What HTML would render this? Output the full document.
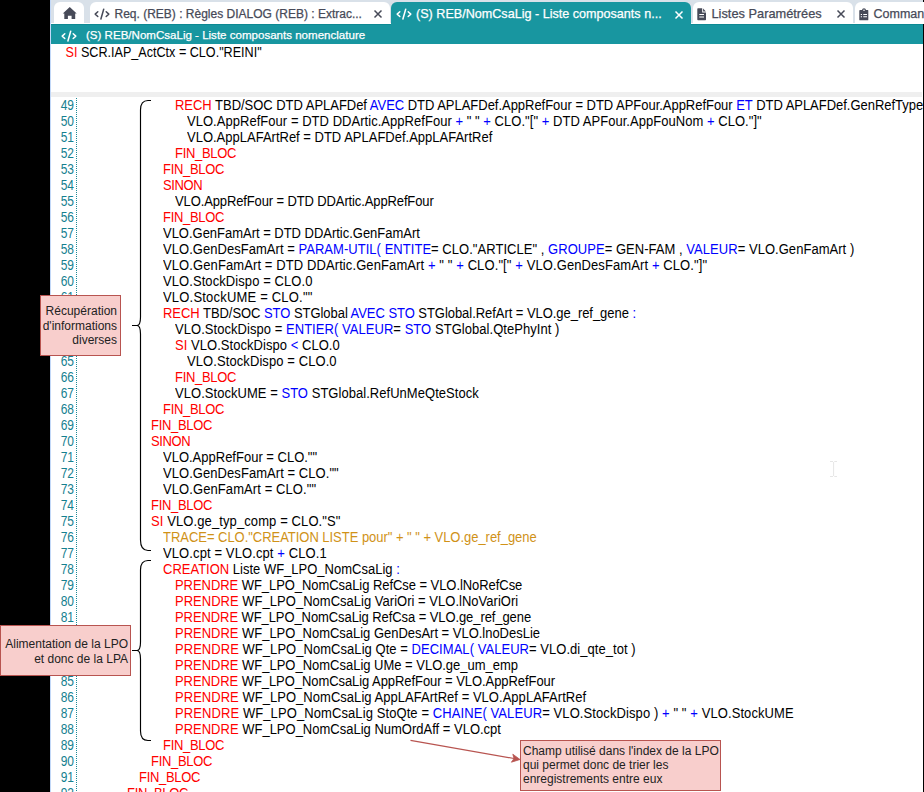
<!DOCTYPE html>
<html><head><meta charset="utf-8">
<style>
html,body{margin:0;padding:0;}
body{width:924px;height:792px;position:relative;overflow:hidden;background:#000;font-family:"Liberation Sans",sans-serif;}
.abs{position:absolute;}
i{font-style:normal;}
#app{position:absolute;left:50px;top:0;width:873px;height:792px;background:#fff;}
#edge{position:absolute;left:50px;top:0;width:1px;height:792px;background:#c2d8f8;}
#tabs{position:absolute;left:51px;top:0;width:872px;height:24px;background:linear-gradient(to bottom,#d9e1e9 0 23px,#fff 23px 24px);}
.tab{position:absolute;top:2px;height:22px;background:#fff;border-radius:6px 6px 0 0;}
.tab.act{background:#1896a0;}
.tt{position:absolute;top:7px;font-size:12px;line-height:14px;color:#474a58;white-space:pre;-webkit-text-stroke:0.25px #474a58;}
.tt.w{-webkit-text-stroke:0.25px #fff;}
.tt.w{color:#fff;}
#bar{position:absolute;left:51px;top:24px;width:872px;height:20px;background:#1896a0;border-top:1px solid #0d8a94;box-sizing:border-box;}
#band{position:absolute;left:51px;top:92px;width:871px;height:5px;background:#efefef;}
#code{position:absolute;left:0;top:0;width:923px;height:792px;overflow:hidden;}
.ln{position:absolute;left:50px;width:24px;text-align:right;font-size:12px;color:#15808f;line-height:16px;}
#dots{position:absolute;left:76px;top:98px;width:1px;height:700px;background:repeating-linear-gradient(to bottom,#1e8a96 0 1px,transparent 1px 2px);}
.cl{position:absolute;font-size:13px;line-height:16px;white-space:pre;color:#000;transform:scaleY(1.1);transform-origin:0 12.5px;}
.ln{transform:scaleY(1.17);transform-origin:0 12.3px;}
.k{color:#ff0000;}
.b{color:#0000ff;}
.o{color:#d09218;}
.box{position:absolute;background:#f8cecc;border:1px solid #b85450;box-sizing:border-box;font-size:12px;color:#222222;line-height:14px;}
</style></head><body>
<div id="app"></div>
<div id="edge"></div>

<div id="tabs"></div>
<div class="tab" style="left:53.5px;width:30.5px;"></div>
<svg class="abs" style="left:62px;top:6px" width="16" height="14" viewBox="0 0 16 14"><path d="M7.75 1 L0.8 7.6 L2.3 7.6 L2.3 12.9 L5.9 12.9 L5.9 9.7 L9.6 9.7 L9.6 12.9 L13.2 12.9 L13.2 7.6 L14.7 7.6 Z" fill="#474a58"/></svg>
<div class="tab" style="left:90px;width:299.5px;"></div>
<svg class="abs" style="left:93.5px;top:8px" width="16" height="13" viewBox="0 0 16 13"><g fill="none" stroke="#474a58" stroke-width="1.5" stroke-linecap="round" stroke-linejoin="round"><path d="M3.8 3.7 L1.2 6.1 L3.8 8.5"/><path d="M12.2 3.7 L14.8 6.1 L12.2 8.5"/><path d="M9.7 1.2 L6.9 11"/></g></svg>
<span class="tt" style="left:114.5px;">Req. (REB) : Règles DIALOG (REB) : Extrac...</span>
<svg class="abs" style="left:373px;top:9px" width="10" height="10" viewBox="0 0 10 10"><g stroke="#474a58" stroke-width="1.5" stroke-linecap="butt"><path d="M1.5 1.5 L8.5 8.5 M8.5 1.5 L1.5 8.5"/></g></svg>
<div class="tab act" style="left:391px;top:1.5px;height:22.5px;width:299.5px;"></div>
<svg class="abs" style="left:395.5px;top:8px" width="16" height="13" viewBox="0 0 16 13"><g fill="none" stroke="#fff" stroke-width="1.5" stroke-linecap="round" stroke-linejoin="round"><path d="M3.8 3.7 L1.2 6.1 L3.8 8.5"/><path d="M12.2 3.7 L14.8 6.1 L12.2 8.5"/><path d="M9.7 1.2 L6.9 11"/></g></svg>
<span class="tt w" style="left:416px;font-size:12.6px">(S) REB/NomCsaLig - Liste composants n...</span>
<svg class="abs" style="left:674px;top:9.5px" width="10" height="10" viewBox="0 0 10 10"><g stroke="#fff" stroke-width="1.5" stroke-linecap="butt"><path d="M1.5 1.5 L8.5 8.5 M8.5 1.5 L1.5 8.5"/></g></svg>
<div class="tab" style="left:692.5px;width:160px;"></div>
<svg class="abs" style="left:697px;top:8px" width="10" height="13" viewBox="0 0 10 13"><path d="M1 0.3 H5.2 V4.4 H9 V11.6 Q9 12.3 8.3 12.3 H1 Q0.3 12.3 0.3 11.6 V1 Q0.3 0.3 1 0.3 Z M6.1 0.4 L8.9 3.4 H6.1 Z" fill="#474a58"/><path d="M2.3 6.5 H7 M2.3 9 H7" stroke="#fff" stroke-width="1.1"/></svg>
<span class="tt" style="left:711.5px;font-size:12.8px">Listes Paramétrées</span>
<svg class="abs" style="left:836px;top:9px" width="10" height="10" viewBox="0 0 10 10"><g stroke="#474a58" stroke-width="1.5" stroke-linecap="butt"><path d="M1.5 1.5 L8.5 8.5 M8.5 1.5 L1.5 8.5"/></g></svg>
<div class="tab" style="left:855px;width:120px;"></div>
<svg class="abs" style="left:859px;top:8px" width="10" height="13" viewBox="0 0 10 13"><path d="M1 2 H3 Q3.2 0.3 5 0.3 Q6.8 0.3 7 2 H9 Q9.3 2 9.3 2.4 V11.8 Q9.3 12.3 8.8 12.3 H1 Q0.3 12.3 0.3 11.8 V2.4 Q0.3 2 1 2 Z" fill="#474a58"/><circle cx="5" cy="2.3" r="0.8" fill="#fff"/><path d="M1.8 6.5 H3 M4.3 6.5 H8 M1.8 8.8 H3 M4.3 8.8 H8" stroke="#fff" stroke-width="1.1"/></svg>
<span class="tt" style="left:873.5px;font-size:12.5px">Commandes</span>

<div id="bar"></div>
<div class="abs" style="left:391px;top:23px;width:299.5px;height:2px;background:#1896a0"></div>
<svg class="abs" style="left:60.5px;top:29.5px" width="16" height="13" viewBox="0 0 16 13"><g fill="none" stroke="#fff" stroke-width="1.5" stroke-linecap="round" stroke-linejoin="round"><path d="M3.8 3.7 L1.2 6.1 L3.8 8.5"/><path d="M12.2 3.7 L14.8 6.1 L12.2 8.5"/><path d="M9.7 1.2 L6.9 11"/></g></svg>
<span class="tt w" style="left:86px;top:28px;font-size:11.55px">(S) REB/NomCsaLig - Liste composants nomenclature</span>
<div class="cl" style="left:65.5px;top:45px;font-size:12.6px"><i class="k">SI</i> SCR.IAP_ActCtx = CLO."REINI"</div>
<div id="band"></div>
<div id="dots"></div>
<div id="code">
<div class="ln" style="top:98px">49</div>
<div class="cl" style="left:175px;top:98px;letter-spacing:-0.028px;"><i class="k">RECH</i> TBD/SOC DTD APLAFDef <i class="b">AVEC</i> DTD APLAFDef.AppRefFour = DTD APFour.AppRefFour <i class="b">ET</i> DTD APLAFDef.GenRefType.AppTypRef</div>
<div class="ln" style="top:114px">50</div>
<div class="cl" style="left:187px;top:114px;letter-spacing:0.037px;">VLO.AppRefFour = DTD DDArtic.AppRefFour <i class="b">+</i> " " <i class="b">+</i> CLO."[" <i class="b">+</i> DTD APFour.AppFouNom <i class="b">+</i> CLO."]"</div>
<div class="ln" style="top:130px">51</div>
<div class="cl" style="left:187px;top:130px;">VLO.AppLAFArtRef = DTD APLAFDef.AppLAFArtRef</div>
<div class="ln" style="top:146px">52</div>
<div class="cl" style="left:175px;top:146px;letter-spacing:-0.3px;"><i class="k">FIN_BLOC</i></div>
<div class="ln" style="top:162px">53</div>
<div class="cl" style="left:163px;top:162px;letter-spacing:-0.3px;"><i class="k">FIN_BLOC</i></div>
<div class="ln" style="top:178px">54</div>
<div class="cl" style="left:163px;top:178px;letter-spacing:-0.4px;"><i class="k">SINON</i></div>
<div class="ln" style="top:194px">55</div>
<div class="cl" style="left:175px;top:194px;letter-spacing:-0.121px;">VLO.AppRefFour = DTD DDArtic.AppRefFour</div>
<div class="ln" style="top:210px">56</div>
<div class="cl" style="left:163px;top:210px;letter-spacing:-0.3px;"><i class="k">FIN_BLOC</i></div>
<div class="ln" style="top:226px">57</div>
<div class="cl" style="left:163px;top:226px;letter-spacing:-0.019px;">VLO.GenFamArt = DTD DDArtic.GenFamArt</div>
<div class="ln" style="top:242px">58</div>
<div class="cl" style="left:163px;top:242px;letter-spacing:0.038px;">VLO.GenDesFamArt = <i class="b">PARAM-UTIL(</i> <i class="b">ENTITE</i>= CLO."ARTICLE" , <i class="b">GROUPE</i>= GEN-FAM , <i class="b">VALEUR</i>= VLO.GenFamArt )</div>
<div class="ln" style="top:258px">59</div>
<div class="cl" style="left:163px;top:258px;letter-spacing:0.100px;">VLO.GenFamArt = DTD DDArtic.GenFamArt <i class="b">+</i> " " <i class="b">+</i> CLO."[" <i class="b">+</i> VLO.GenDesFamArt <i class="b">+</i> CLO."]"</div>
<div class="ln" style="top:274px">60</div>
<div class="cl" style="left:163px;top:274px;letter-spacing:0.076px;">VLO.StockDispo = CLO.0</div>
<div class="ln" style="top:290px">61</div>
<div class="cl" style="left:163px;top:290px;letter-spacing:0.195px;">VLO.StockUME = CLO.""</div>
<div class="ln" style="top:306px">62</div>
<div class="cl" style="left:163px;top:306px;letter-spacing:-0.048px;"><i class="k">RECH</i> TBD/SOC <i class="b">STO</i> STGlobal <i class="b">AVEC</i> <i class="b">STO</i> STGlobal.RefArt = VLO.ge_ref_gene <i class="b">:</i></div>
<div class="ln" style="top:322px">63</div>
<div class="cl" style="left:175px;top:322px;letter-spacing:0.046px;">VLO.StockDispo = <i class="b">ENTIER(</i> <i class="b">VALEUR</i>= <i class="b">STO</i> STGlobal.QtePhyInt )</div>
<div class="ln" style="top:338px">64</div>
<div class="cl" style="left:175px;top:338px;letter-spacing:0.042px;"><i class="k">SI</i> VLO.StockDispo <i class="b">&lt;</i> CLO.0</div>
<div class="ln" style="top:354px">65</div>
<div class="cl" style="left:187px;top:354px;letter-spacing:0.086px;">VLO.StockDispo = CLO.0</div>
<div class="ln" style="top:370px">66</div>
<div class="cl" style="left:175px;top:370px;letter-spacing:-0.3px;"><i class="k">FIN_BLOC</i></div>
<div class="ln" style="top:386px">67</div>
<div class="cl" style="left:175px;top:386px;letter-spacing:0.038px;">VLO.StockUME = <i class="b">STO</i> STGlobal.RefUnMeQteStock</div>
<div class="ln" style="top:402px">68</div>
<div class="cl" style="left:163px;top:402px;letter-spacing:-0.3px;"><i class="k">FIN_BLOC</i></div>
<div class="ln" style="top:418px">69</div>
<div class="cl" style="left:151px;top:418px;letter-spacing:-0.3px;"><i class="k">FIN_BLOC</i></div>
<div class="ln" style="top:434px">70</div>
<div class="cl" style="left:151px;top:434px;letter-spacing:-0.4px;"><i class="k">SINON</i></div>
<div class="ln" style="top:450px">71</div>
<div class="cl" style="left:163px;top:450px;">VLO.AppRefFour = CLO.""</div>
<div class="ln" style="top:466px">72</div>
<div class="cl" style="left:163px;top:466px;letter-spacing:0.058px;">VLO.GenDesFamArt = CLO.""</div>
<div class="ln" style="top:482px">73</div>
<div class="cl" style="left:163px;top:482px;letter-spacing:0.090px;">VLO.GenFamArt = CLO.""</div>
<div class="ln" style="top:498px">74</div>
<div class="cl" style="left:151px;top:498px;letter-spacing:-0.3px;"><i class="k">FIN_BLOC</i></div>
<div class="ln" style="top:514px">75</div>
<div class="cl" style="left:151px;top:514px;letter-spacing:0.104px;"><i class="k">SI</i> VLO.ge_typ_comp = CLO."S"</div>
<div class="ln" style="top:530px">76</div>
<div class="cl" style="left:163px;top:530px;letter-spacing:-0.033px;"><i class="o">TRACE= CLO."CREATION LISTE pour" + " " + VLO.ge_ref_gene</i></div>
<div class="ln" style="top:546px">77</div>
<div class="cl" style="left:163px;top:546px;letter-spacing:0.108px;">VLO.cpt = VLO.cpt <i class="b">+</i> CLO.1</div>
<div class="ln" style="top:562px">78</div>
<div class="cl" style="left:163px;top:562px;"><i class="k">CREATION</i> Liste WF_LPO_NomCsaLig <i class="b">:</i></div>
<div class="ln" style="top:578px">79</div>
<div class="cl" style="left:175px;top:578px;letter-spacing:-0.059px;"><i class="k">PRENDRE</i> WF_LPO_NomCsaLig RefCse = VLO.lNoRefCse</div>
<div class="ln" style="top:594px">80</div>
<div class="cl" style="left:175px;top:594px;letter-spacing:0.019px;"><i class="k">PRENDRE</i> WF_LPO_NomCsaLig VariOri = VLO.lNoVariOri</div>
<div class="ln" style="top:610px">81</div>
<div class="cl" style="left:175px;top:610px;letter-spacing:-0.085px;"><i class="k">PRENDRE</i> WF_LPO_NomCsaLig RefCsa = VLO.ge_ref_gene</div>
<div class="ln" style="top:626px">82</div>
<div class="cl" style="left:175px;top:626px;letter-spacing:-0.020px;"><i class="k">PRENDRE</i> WF_LPO_NomCsaLig GenDesArt = VLO.lnoDesLie</div>
<div class="ln" style="top:642px">83</div>
<div class="cl" style="left:175px;top:642px;letter-spacing:0.044px;"><i class="k">PRENDRE</i> WF_LPO_NomCsaLig Qte = <i class="b">DECIMAL(</i> <i class="b">VALEUR</i>= VLO.di_qte_tot )</div>
<div class="ln" style="top:658px">84</div>
<div class="cl" style="left:175px;top:658px;letter-spacing:-0.012px;"><i class="k">PRENDRE</i> WF_LPO_NomCsaLig UMe = VLO.ge_um_emp</div>
<div class="ln" style="top:674px">85</div>
<div class="cl" style="left:175px;top:674px;letter-spacing:-0.063px;"><i class="k">PRENDRE</i> WF_LPO_NomCsaLig AppRefFour = VLO.AppRefFour</div>
<div class="ln" style="top:690px">86</div>
<div class="cl" style="left:175px;top:690px;letter-spacing:0.033px;"><i class="k">PRENDRE</i> WF_LPO_NomCsaLig AppLAFArtRef = VLO.AppLAFArtRef</div>
<div class="ln" style="top:706px">87</div>
<div class="cl" style="left:175px;top:706px;letter-spacing:0.091px;"><i class="k">PRENDRE</i> WF_LPO_NomCsaLig StoQte = <i class="b">CHAINE(</i> <i class="b">VALEUR</i>= VLO.StockDispo ) <i class="b">+</i> " " <i class="b">+</i> VLO.StockUME</div>
<div class="ln" style="top:722px">88</div>
<div class="cl" style="left:175px;top:722px;"><i class="k">PRENDRE</i> WF_LPO_NomCsaLig NumOrdAff = VLO.cpt</div>
<div class="ln" style="top:738px">89</div>
<div class="cl" style="left:163px;top:738px;letter-spacing:-0.3px;"><i class="k">FIN_BLOC</i></div>
<div class="ln" style="top:754px">90</div>
<div class="cl" style="left:151px;top:754px;letter-spacing:-0.3px;"><i class="k">FIN_BLOC</i></div>
<div class="ln" style="top:770px">91</div>
<div class="cl" style="left:139px;top:770px;letter-spacing:-0.3px;"><i class="k">FIN_BLOC</i></div>
<div class="ln" style="top:786px">92</div>
<div class="cl" style="left:127px;top:786px;letter-spacing:-0.3px;"><i class="k">FIN_BLOC</i></div>
</div>

<svg class="abs" style="left:0;top:0" width="924" height="792" viewBox="0 0 924 792">
<g fill="none" stroke="#000" stroke-width="1.15">
<path d="M151 100.5 H148 Q140.5 100.5 140.5 110 V317 Q140.5 325.5 137 325.5 H132 M137 325.5 Q140.5 325.5 140.5 334 V540 Q140.5 550.5 148 550.5 H151"/>
<path d="M151 560.5 H148 Q140.5 560.5 140.5 570 V642 Q140.5 650.5 137 650.5 H132 M137 650.5 Q140.5 650.5 140.5 659 V731 Q140.5 740.5 148 740.5 H151"/>
</g>
<path d="M410.5 740.3 L514 758.5" stroke="#b85450" stroke-width="1.2" fill="none"/>
<path d="M520 759.5 L511.4 762.2 L514 758.5 L512.8 754.2 Z" fill="#b85450" stroke="#b85450" stroke-width="0.8" stroke-linejoin="round"/>
</svg>
<div class="box" style="left:40px;top:295px;width:81px;height:61px;text-align:right;padding:8px 3px 0 0;line-height:14.5px">Récupération<br>d'informations<br>diverses</div>
<div class="box" style="left:0;top:625px;width:131px;height:51px;text-align:right;padding:11px 2px 0 0;line-height:15px">Alimentation de la LPO<br>et donc de la LPA</div>
<div class="box" style="left:520px;top:740px;width:201px;height:51px;text-align:left;padding:4px 0 0 2px;line-height:13.9px">Champ utilisé dans l'index de la LPO<br>qui permet donc de trier les<br>enregistrements entre eux</div>

<svg class="abs" style="left:828px;top:460px" width="11" height="18" viewBox="0 0 11 18"><path d="M2 1.5 H5 M6.3 1.5 H9 M5.6 2 V16 M2 16.5 H5 M6.3 16.5 H9" stroke="#e6e6e6" stroke-width="1"/></svg>
</body></html>
